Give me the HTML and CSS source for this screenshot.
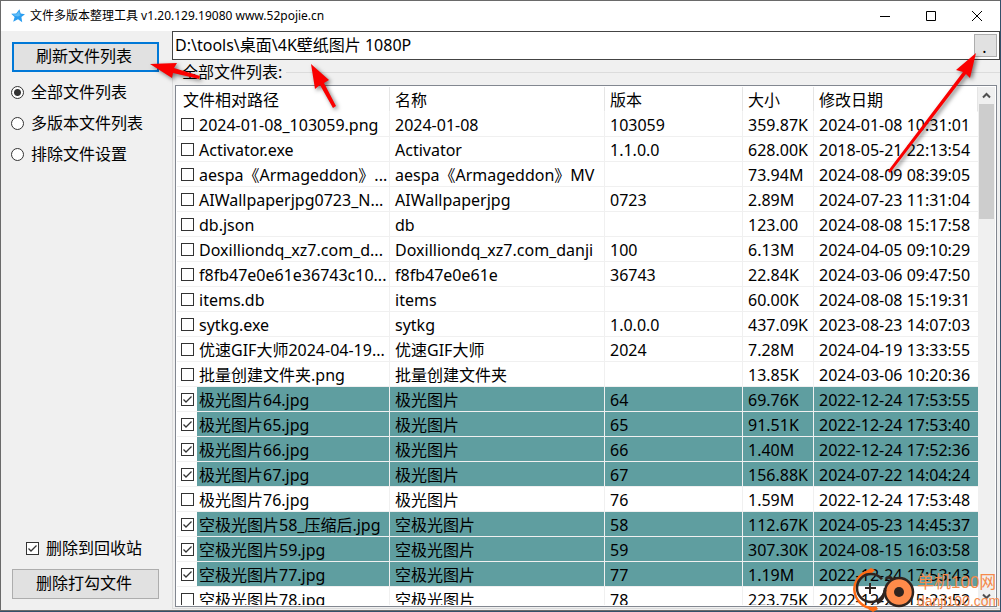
FILE: index.html
```html
<!DOCTYPE html>
<html lang="zh-CN">
<head>
<meta charset="utf-8">
<title>文件多版本整理工具</title>
<link rel="stylesheet" href="styles.css">
</head>
<body>
<div class="window">
  <header class="titlebar">
    <svg class="app-icon" viewBox="0 0 16 16" aria-hidden="true"><path d="M9.4 1.2 10.7 5.6 15 6.3 11.4 9 12.2 14.2 8 11.3 3.2 13.8 4.6 9 1.2 5.8 6.2 5.6Z" fill="#2a9df0"/><path d="M9.2 3 9.8 6.4 11 7 8 8.6 5 8 2.6 6.3 6.6 6.2Z" fill="#5fbcf6"/></svg>
    <h1 class="title">文件多版本整理工具 v1.20.129.19080 www.52pojie.cn</h1>
    <div class="caption-buttons">
      <button class="caption" aria-label="最小化"><svg viewBox="0 0 12 12"><path d="M1 6.5H11"/></svg></button>
      <button class="caption" aria-label="最大化"><svg viewBox="0 0 12 12"><path d="M1.5 1.5H10.5V10.5H1.5Z"/></svg></button>
      <button class="caption" aria-label="关闭"><svg viewBox="0 0 12 12"><path d="M1 1 11 11M11 1 1 11"/></svg></button>
    </div>
  </header>
  <div class="content">
    <aside class="sidebar">
      <button class="btn btn-default">刷新文件列表</button>
      <div class="views">
        <label class="option"><input type="radio" name="view" class="radio" checked>全部文件列表</label>
        <label class="option"><input type="radio" name="view" class="radio">多版本文件列表</label>
        <label class="option"><input type="radio" name="view" class="radio">排除文件设置</label>
      </div>
      <label class="option recycle"><input type="checkbox" class="check" checked>删除到回收站</label>
      <button class="btn">删除打勾文件</button>
    </aside>
    <main class="main">
      <div class="path-row">
        <input class="path" type="text" aria-label="路径" value="D:\tools\桌面\4K壁纸图片 1080P">
        <button class="browse" aria-label="浏览">.</button>
      </div>
      <fieldset class="group">
        <legend class="legend">全部文件列表:</legend>
        <div class="list">
          <div class="list-view">
            <table class="files">
              <colgroup><col class="c-path"><col class="c-name"><col class="c-ver"><col class="c-size"><col></colgroup>
              <thead><tr><th>文件相对路径</th><th>名称</th><th>版本</th><th>大小</th><th>修改日期</th></tr></thead>
              <tbody>
                <tr><td><label class="file"><input type="checkbox" class="check"><span>2024-01-08_103059.png</span></label></td><td>2024-01-08</td><td>103059</td><td>359.87K</td><td>2024-01-08 10:31:01</td></tr>
                <tr><td><label class="file"><input type="checkbox" class="check"><span>Activator.exe</span></label></td><td>Activator</td><td>1.1.0.0</td><td>628.00K</td><td>2018-05-21 22:13:54</td></tr>
                <tr><td><label class="file"><input type="checkbox" class="check"><span>aespa《Armageddon》...</span></label></td><td>aespa《Armageddon》MV</td><td></td><td>73.94M</td><td>2024-08-09 08:39:05</td></tr>
                <tr><td><label class="file"><input type="checkbox" class="check"><span>AIWallpaperjpg0723_N...</span></label></td><td>AIWallpaperjpg</td><td>0723</td><td>2.89M</td><td>2024-07-23 11:31:04</td></tr>
                <tr><td><label class="file"><input type="checkbox" class="check"><span>db.json</span></label></td><td>db</td><td></td><td>123.00</td><td>2024-08-08 15:17:58</td></tr>
                <tr><td><label class="file"><input type="checkbox" class="check"><span>Doxilliondq_xz7.com_d...</span></label></td><td>Doxilliondq_xz7.com_danji</td><td>100</td><td>6.13M</td><td>2024-04-05 09:10:29</td></tr>
                <tr><td><label class="file"><input type="checkbox" class="check"><span>f8fb47e0e61e36743c10...</span></label></td><td>f8fb47e0e61e</td><td>36743</td><td>22.84K</td><td>2024-03-06 09:47:50</td></tr>
                <tr><td><label class="file"><input type="checkbox" class="check"><span>items.db</span></label></td><td>items</td><td></td><td>60.00K</td><td>2024-08-08 15:19:31</td></tr>
                <tr><td><label class="file"><input type="checkbox" class="check"><span>sytkg.exe</span></label></td><td>sytkg</td><td>1.0.0.0</td><td>437.09K</td><td>2023-08-23 14:07:03</td></tr>
                <tr><td><label class="file"><input type="checkbox" class="check"><span>优速GIF大师2024-04-19...</span></label></td><td>优速GIF大师</td><td>2024</td><td>7.28M</td><td>2024-04-19 13:33:55</td></tr>
                <tr><td><label class="file"><input type="checkbox" class="check"><span>批量创建文件夹.png</span></label></td><td>批量创建文件夹</td><td></td><td>13.85K</td><td>2024-03-06 10:20:36</td></tr>
                <tr class="marked"><td><label class="file"><input type="checkbox" class="check" checked><span>极光图片64.jpg</span></label></td><td>极光图片</td><td>64</td><td>69.76K</td><td>2022-12-24 17:53:55</td></tr>
                <tr class="marked"><td><label class="file"><input type="checkbox" class="check" checked><span>极光图片65.jpg</span></label></td><td>极光图片</td><td>65</td><td>91.51K</td><td>2022-12-24 17:53:40</td></tr>
                <tr class="marked"><td><label class="file"><input type="checkbox" class="check" checked><span>极光图片66.jpg</span></label></td><td>极光图片</td><td>66</td><td>1.40M</td><td>2022-12-24 17:52:36</td></tr>
                <tr class="marked"><td><label class="file"><input type="checkbox" class="check" checked><span>极光图片67.jpg</span></label></td><td>极光图片</td><td>67</td><td>156.88K</td><td>2024-07-22 14:04:24</td></tr>
                <tr><td><label class="file"><input type="checkbox" class="check"><span>极光图片76.jpg</span></label></td><td>极光图片</td><td>76</td><td>1.59M</td><td>2022-12-24 17:53:48</td></tr>
                <tr class="marked"><td><label class="file"><input type="checkbox" class="check" checked><span>空极光图片58_压缩后.jpg</span></label></td><td>空极光图片</td><td>58</td><td>112.67K</td><td>2024-05-23 14:45:37</td></tr>
                <tr class="marked"><td><label class="file"><input type="checkbox" class="check" checked><span>空极光图片59.jpg</span></label></td><td>空极光图片</td><td>59</td><td>307.30K</td><td>2024-08-15 16:03:58</td></tr>
                <tr class="marked"><td><label class="file"><input type="checkbox" class="check" checked><span>空极光图片77.jpg</span></label></td><td>空极光图片</td><td>77</td><td>1.19M</td><td>2022-12-24 17:53:43</td></tr>
                <tr><td><label class="file"><input type="checkbox" class="check"><span>空极光图片78.jpg</span></label></td><td>空极光图片</td><td>78</td><td>223.75K</td><td>2022-12-24 15:23:52</td></tr>
              </tbody>
            </table>
          </div>
          <div class="scrollbar">
            <button class="scroll-btn" aria-label="向上滚动"><svg viewBox="0 0 9 7"><path d="M1 5.5 4.5 2 8 5.5"/></svg></button>
            <div class="thumb"></div>
            <button class="scroll-btn scroll-down" aria-label="向下滚动"><svg viewBox="0 0 9 7"><path d="M1 1.5 4.5 5 8 1.5"/></svg></button>
          </div>
        </div>
      </fieldset>
    </main>
  </div>
</div>

<svg class="arrows arrows-left" viewBox="0 0 360 120" aria-hidden="true">
  <path d="M150 64 177 63 174 68 200 76 199 79 173 73 172 78Z"/>
  <path d="M311 64 329 80 324 83 336 106 333 108 320 85 315 89Z"/>
</svg>
<svg class="arrows arrows-right" viewBox="0 0 121 200" aria-hidden="true">
  <path d="M96 53 90 78 86 74 10 173 8 171 83 72 76 70Z"/>
</svg>
<div class="watermark">
  <svg class="mark" viewBox="0 0 64 44" aria-hidden="true">
    <path d="M20 3C6 4-1 17 4 29 8 37 14 40 24 41" fill="none" stroke="#ff6a13" stroke-width="2.5"/>
    <path d="M12 4 19 0 23 2 19 6ZM16 41 24 38 26 41 21 44Z" fill="#ff6a13"/>
    <circle cx="19" cy="20" r="14" fill="none" stroke="#30241f" stroke-width="2.5" stroke-dasharray="78 10"/>
    <path d="M18 15V26M13 20H24" fill="none" stroke="#30241f" stroke-width="2"/>
    <path d="M34 11C35 9 39 8 40 12" fill="none" stroke="#30241f" stroke-width="3"/>
    <circle cx="47" cy="24" r="14" fill="#ff8b4a" stroke="#30241f" stroke-width="2.5"/>
    <path d="M33 22C32 29 30 33 25 35" fill="none" stroke="#30241f" stroke-width="3"/>
    <circle cx="47" cy="24" r="5" fill="#30241f"/>
  </svg>
  <div class="mark-text"><span class="mark-name">单机100网</span><span class="mark-url">danji100.com</span></div>
</div>
</body>
</html>
```
FILE: styles.css
```css
* {
  box-sizing: border-box;
}

body {
  margin: 0;
  height: 100vh;
  display: flex;
  position: relative;
  overflow: hidden;
  background: #34506a;
  color: #000;
  font: 16px/24px "Noto Sans", "Noto Sans CJK SC", sans-serif;
}

button,
input {
  font: inherit;
  color: inherit;
  margin: 0;
}

.window {
  flex: 1;
  display: flex;
  flex-direction: column;
  min-width: 0;
  margin: 0 1px 1px 0;
  border: 1px solid #6a6a6a;
  border-right-width: 0;
  background: #f0f0f0;
}

.titlebar {
  display: flex;
  align-items: center;
  flex: none;
  height: 30px;
  padding-left: 9px;
  background: #fff;
}

.app-icon {
  width: 16px;
  height: 16px;
  margin-right: 4px;
}

.title {
  flex: 1;
  margin: 0;
  font-size: 12px;
  font-weight: 400;
  line-height: 16px;
}

.caption-buttons {
  display: flex;
}

.caption {
  display: grid;
  place-items: center;
  width: 46px;
  height: 30px;
  padding: 0;
  border: 0;
  background: none;
}

.caption svg {
  width: 12px;
  height: 12px;
  fill: none;
  stroke: #000;
}

.content {
  flex: 1;
  display: flex;
  min-height: 0;
}

.sidebar {
  flex: none;
  display: flex;
  flex-direction: column;
  width: 171px;
  padding: 11px 13px 11px 10px;
}

.btn {
  height: 30px;
  margin-left: 1px;
  padding: 0 3px 2px 0;
  border: 1px solid #adadad;
  background: #e1e1e1;
  line-height: 24px;
}

.btn-default {
  border: 2px solid #0078d7;
}

.views {
  display: flex;
  flex-direction: column;
  gap: 7px;
  margin-top: 8px;
}

.option {
  display: flex;
  align-items: center;
  gap: 7px;
}

.recycle {
  margin: auto 0 9px 15px;
}

.radio,
.check {
  appearance: none;
  flex: none;
  width: 13px;
  height: 13px;
  border: 1px solid #333;
  background: #fff;
}

.radio {
  border-radius: 50%;
}

.radio:checked {
  background: radial-gradient(circle, #333 3px, #fff 4px);
}

.check:checked {
  background: #fff url("data:image/svg+xml,%3Csvg xmlns='http://www.w3.org/2000/svg' viewBox='0 0 11 11'%3E%3Cpath d='M1.5 5.5 4 8 9.5 2.5' fill='none' stroke='%23333' stroke-width='1.3'/%3E%3C/svg%3E") center / 11px 11px;
}

.main {
  flex: 1;
  display: flex;
  flex-direction: column;
  min-width: 0;
}

.path-row {
  flex: none;
  display: flex;
  height: 29px;
  border: 1px solid #444;
  background: #fff;
}

.path {
  flex: 1;
  min-width: 0;
  padding: 0 2px 2px;
  border: 0;
  outline: 0;
  background: none;
}

.browse {
  width: 23px;
  height: 23px;
  margin: 2px;
  padding: 0 2px 0 0;
  border: 1px solid #adadad;
  background: #e1e1e1;
  line-height: 24px;
}

.group {
  flex: 1;
  display: flex;
  flex-direction: column;
  min-width: 0;
  min-height: 0;
  margin: 0 0 1px;
  padding: 1px 3px 1px 2px;
  border: 1px solid #dcdcdc;
  border-right: 0;
}

.legend {
  margin-left: 5px;
  padding: 0 4px 0 2px;
}

.list {
  flex: 1;
  display: flex;
  min-height: 0;
  padding: 1px;
  border: 1px solid #828790;
  background: #fff;
}

.list-view {
  flex: 1;
  min-width: 0;
  overflow: hidden;
}

.files {
  width: 100%;
  table-layout: fixed;
  border-collapse: separate;
  border-spacing: 0;
}

.c-path { width: 213px; }
.c-name { width: 215px; }
.c-ver { width: 138px; }
.c-size { width: 71px; }

.files th,
.files td {
  height: 25px;
  padding: 2px 0 0 5px;
  border-right: 1px solid #f0f0f0;
  border-bottom: 1px solid #f0f0f0;
  font-weight: 400;
  line-height: 22px;
  text-align: left;
  white-space: nowrap;
  overflow: hidden;
}

.files th {
  border-right-color: #e5e5e5;
  border-bottom-color: #fff;
}

.files td:last-child {
  border-right: 0;
}

.files td:first-child {
  padding: 0 0 0 4px;
}

.files th:first-child {
  padding-left: 6px;
}

.file {
  display: flex;
  align-items: center;
  gap: 3px;
}

.file span {
  flex: 1;
  padding: 2px 0 0 2px;
}

.marked td + td,
.marked .file span {
  background: #5f9ea0;
}

.scrollbar {
  flex: none;
  display: flex;
  flex-direction: column;
  width: 17px;
  background: #f0f0f0;
}

.scroll-btn {
  display: grid;
  place-items: center;
  height: 17px;
  padding: 0;
  border: 0;
  background: none;
}

.scroll-btn svg {
  width: 9px;
  height: 7px;
  fill: none;
  stroke: #505050;
  stroke-width: 2;
}

.scroll-down {
  margin-top: auto;
}

.thumb {
  height: 115px;
  margin: 0 1px;
  background: #cdcdcd;
}

.arrows {
  position: absolute;
  top: 0;
  fill: #fa0000;
  filter: drop-shadow(2px 2px 2px rgb(0 0 0 / 0.5));
  pointer-events: none;
}

.arrows-left {
  left: 0;
  width: 360px;
  height: 120px;
}

.arrows-right {
  right: 0;
  width: 121px;
  height: 200px;
}

.watermark {
  position: absolute;
  right: 2px;
  bottom: 0;
  display: flex;
  gap: 1px;
  color: #f58a4b;
  font-family: "Liberation Sans", "Noto Sans CJK SC", sans-serif;
  pointer-events: none;
}

.mark {
  width: 64px;
  height: 44px;
}

.mark-text {
  display: flex;
  flex-direction: column;
  justify-content: flex-end;
  width: 82px;
  padding-bottom: 3px;
  white-space: nowrap;
}

.mark-name {
  font-size: 17px;
  line-height: 20px;
}

.mark-url {
  font-size: 14px;
  line-height: 16px;
}
```
